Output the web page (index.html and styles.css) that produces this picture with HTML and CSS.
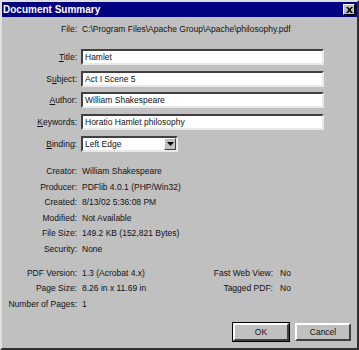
FILE: index.html
```html
<!DOCTYPE html>
<html>
<head>
    <link rel="stylesheet" href="styles.css">
</head>
<body>
    <div class="window">
        <div class="titlebar">
            <span class="title">Document Summary</span>
            <span class="close-btn">
                <svg width="7" height="6" viewBox="0 0 7 6"><path d="M0 0h2l1.5 1.8L5 0h2L4.5 3 7 6H5L3.5 4.2 2 6H0l2.5-3z" fill="#000"/></svg>
            </span>
        </div>

        <div class="dialog">
            <div class="file-row">
                <span class="label">File:</span>
                <span class="value">C:\Program Files\Apache Group\Apache\philosophy.pdf</span>
            </div>

            <div class="fields">
                <label class="label"><u>T</u>itle:</label>
                <div class="text-field">Hamlet</div>
                <label class="label">S<u>u</u>bject:</label>
                <div class="text-field">Act I Scene 5</div>
                <label class="label"><u>A</u>uthor:</label>
                <div class="text-field">William Shakespeare</div>
                <label class="label"><u>K</u>eywords:</label>
                <div class="text-field">Horatio Hamlet philosophy</div>
                <label class="label"><u>B</u>inding:</label>
                <div class="select-field">
                    <span class="select-text">Left Edge</span>
                    <span class="select-arrow">
                        <svg width="7" height="4" viewBox="0 0 7 4"><path d="M0 0h7L3.5 4z" fill="#000"/></svg>
                    </span>
                </div>
            </div>

            <div class="info">
                <span class="label">Creator:</span><span class="value">William Shakespeare</span>
                <span class="label">Producer:</span><span class="value">PDFlib 4.0.1 (PHP/Win32)</span>
                <span class="label">Created:</span><span class="value">8/13/02 5:36:08 PM</span>
                <span class="label">Modified:</span><span class="value">Not Available</span>
                <span class="label">File Size:</span><span class="value">149.2 KB (152,821 Bytes)</span>
                <span class="label">Security:</span><span class="value">None</span>
            </div>

            <div class="details">
                <div class="info info-left">
                    <span class="label">PDF Version:</span><span class="value">1.3 (Acrobat 4.x)</span>
                    <span class="label">Page Size:</span><span class="value">8.26 in x 11.69 in</span>
                    <span class="label">Number of Pages:</span><span class="value">1</span>
                </div>
                <div class="info info-right">
                    <span class="label">Fast Web View:</span><span class="value">No</span>
                    <span class="label">Tagged PDF:</span><span class="value">No</span>
                </div>
            </div>

            <div class="buttons">
                <button class="btn btn-default">OK</button>
                <button class="btn">Cancel</button>
            </div>
        </div>
    </div>
</body>
</html>
```

FILE: styles.css
```css
body {
    margin: 0;
    padding: 0;
    font-family: "Liberation Sans", Arial, sans-serif;
    font-size: 8.5px;
    color: #111;
    background: #c0c0c0;
}

.window {
    width: 359px;
    height: 350px;
    box-sizing: border-box;
    background: #c0c0c0;
    border: 2px solid;
    border-color: #dfdfdf #303030 #303030 #dfdfdf;
    display: flex;
    flex-direction: column;
}

.titlebar {
    height: 15px;
    background: #000080;
    color: #fff;
    display: flex;
    align-items: center;
    justify-content: space-between;
    padding: 0 2px 0 1px;
    flex-shrink: 0;
}

.title {
    font-weight: bold;
    font-size: 10px;
}

.close-btn {
    width: 12px;
    height: 11px;
    box-sizing: border-box;
    background: #c0c0c0;
    border: 1px solid;
    border-color: #fff #000 #000 #fff;
    display: flex;
    align-items: center;
    justify-content: center;
}

.dialog {
    flex: 1;
    padding: 5px 0 0 6px;
    display: flex;
    flex-direction: column;
}

.label {
    text-align: right;
    white-space: nowrap;
}

.value {
    white-space: nowrap;
}

.file-row {
    display: grid;
    grid-template-columns: 69px 1fr;
    column-gap: 5px;
    height: 14px;
    align-items: center;
}

.fields {
    display: grid;
    grid-template-columns: 69px 243px;
    column-gap: 4px;
    row-gap: 5.7px;
    grid-auto-rows: 16px;
    align-items: center;
    margin-top: 13px;
}

.text-field {
    height: 16px;
    box-sizing: border-box;
    background: #fff;
    border: 2px solid;
    border-color: #404040 #e8e8e8 #e8e8e8 #404040;
    padding-left: 2px;
    line-height: 12px;
}

.select-field {
    width: 97px;
    height: 16px;
    box-sizing: border-box;
    background: #fff;
    border: 2px solid;
    border-color: #404040 #e8e8e8 #e8e8e8 #404040;
    display: flex;
    align-items: center;
    justify-content: space-between;
    padding-left: 2px;
}

.select-arrow {
    width: 12px;
    height: 12px;
    box-sizing: border-box;
    background: #c0c0c0;
    border: 1px solid;
    border-color: #fff #404040 #404040 #fff;
    display: flex;
    align-items: center;
    justify-content: center;
}

.info {
    display: grid;
    grid-template-columns: 69px auto;
    column-gap: 5px;
    grid-auto-rows: 15.6px;
    align-items: center;
    margin-top: 11.4px;
}

.details {
    display: flex;
    margin-top: 8.4px;
}

.details .info {
    margin-top: 0;
}

.info-left {
    width: 188px;
}

.info-right {
    grid-template-columns: 77px auto;
    column-gap: 7px;
    align-self: flex-start;
}

.buttons {
    display: flex;
    justify-content: flex-end;
    gap: 6px;
    margin-top: auto;
    padding: 0 6px 7px 0;
}

.btn {
    width: 56px;
    height: 18px;
    box-sizing: border-box;
    background: #c0c0c0;
    font-family: inherit;
    font-size: 8.5px;
    color: #111;
    border: 2px solid;
    border-color: #fff #404040 #404040 #fff;
    padding: 0;
}

.btn-default {
    outline: 1px solid #000;
    outline-offset: 0;
}
```
